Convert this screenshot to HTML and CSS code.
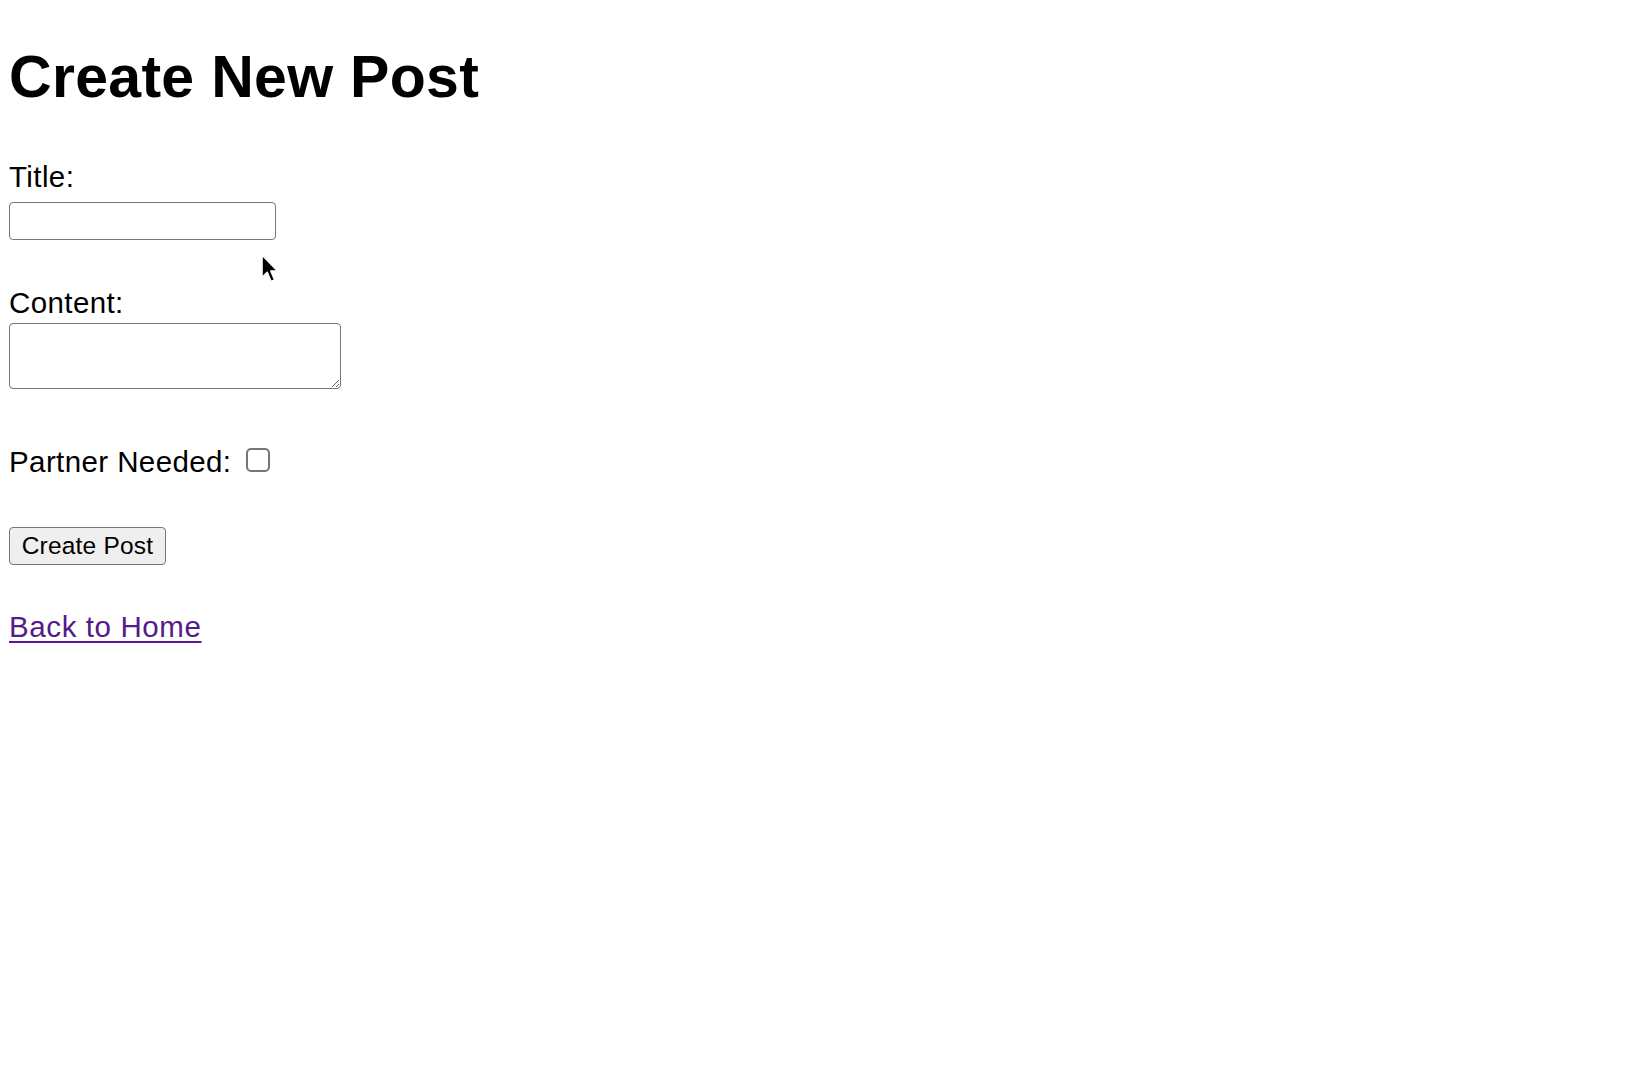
FILE: index.html
```html
<!DOCTYPE html>
<html lang="en">
<head>
<meta charset="utf-8">
<title>Create New Post</title>
<link rel="stylesheet" href="styles.css">
</head>
<body>
<main class="page">
  <h1 class="heading">Create New Post</h1>
  <form class="post-form">
    <label class="field-label" for="title">Title:</label>
    <input class="text-input" id="title" type="text">
    <label class="field-label content-label" for="content">Content:</label>
    <textarea class="text-area" id="content"></textarea>
    <div class="check-row">
      <label class="field-label" for="partner">Partner Needed:</label>
      <input class="check-box" id="partner" type="checkbox">
    </div>
    <div class="button-row">
      <button class="submit-btn" type="submit">Create Post</button>
    </div>
  </form>
  <p class="back-row"><a class="back-link" href="#">Back to Home</a></p>
  <svg class="cursor" width="20" height="32" viewBox="0 0 20 32" aria-hidden="true">
    <path d="M2 2 L2 24.5 L7.2 19.4 L11 28.4 L14.6 26.9 L10.9 18 L17.6 18 Z" fill="#000" stroke="#fff" stroke-width="1.6" stroke-linejoin="round"/>
  </svg>
</main>
</body>
</html>
```
FILE: styles.css
```css
html, body {
  margin: 0;
  padding: 0;
  background: #ffffff;
}

.page {
  position: relative;
  padding: 45px 9px 0 9px;
  font-family: "Liberation Sans", Arial, Helvetica, sans-serif;
  font-size: 29.5px;
  line-height: 32px;
  letter-spacing: 0.4px;
  color: #000;
}

.heading {
  margin: 0;
  font-size: 59px;
  line-height: 64px;
  font-weight: bold;
  letter-spacing: 0.3px;
}

.post-form {
  display: flex;
  flex-direction: column;
  align-items: flex-start;
  margin-top: 52px;
}

.field-label {
  display: block;
  height: 32px;
}

.text-input {
  box-sizing: border-box;
  width: 267px;
  height: 38px;
  margin: 9px 0 0 0;
  border: 1.5px solid #767676;
  border-radius: 4px;
  background: #fff;
  padding: 0 4px;
  font-size: 24px;
  font-family: inherit;
}

.content-label {
  margin-top: 47px;
}

.text-area {
  box-sizing: border-box;
  width: 332px;
  height: 66px;
  margin: 4px 0 0 0;
  border: 1.5px solid #767676;
  border-radius: 4px;
  background: #fff;
  padding: 4px;
  font-family: inherit;
  font-size: 24px;
}

.check-row {
  display: flex;
  align-items: flex-start;
  margin-top: 57px;
}

.check-box {
  -webkit-appearance: none;
  appearance: none;
  box-sizing: border-box;
  width: 24px;
  height: 24px;
  margin: 2px 0 0 15px;
  border: 2px solid #767676;
  border-radius: 5px;
  background: #fff;
}

.button-row {
  margin-top: 49px;
}

.submit-btn {
  box-sizing: border-box;
  height: 38px;
  width: 157px;
  padding: 0;
  border: 1.5px solid #767676;
  border-radius: 4px;
  background: #efefef;
  color: #000;
  font-family: "Liberation Sans", Arial, Helvetica, sans-serif;
  font-size: 24.5px;
  line-height: 34px;
  letter-spacing: 0.2px;
}

.back-row {
  margin: 46px 0 0 0;
}

.back-link {
  color: #551a8b;
  text-decoration: underline;
  text-underline-offset: 4px;
  letter-spacing: 0.6px;
}

.cursor {
  position: absolute;
  left: 260px;
  top: 253px;
}
```
